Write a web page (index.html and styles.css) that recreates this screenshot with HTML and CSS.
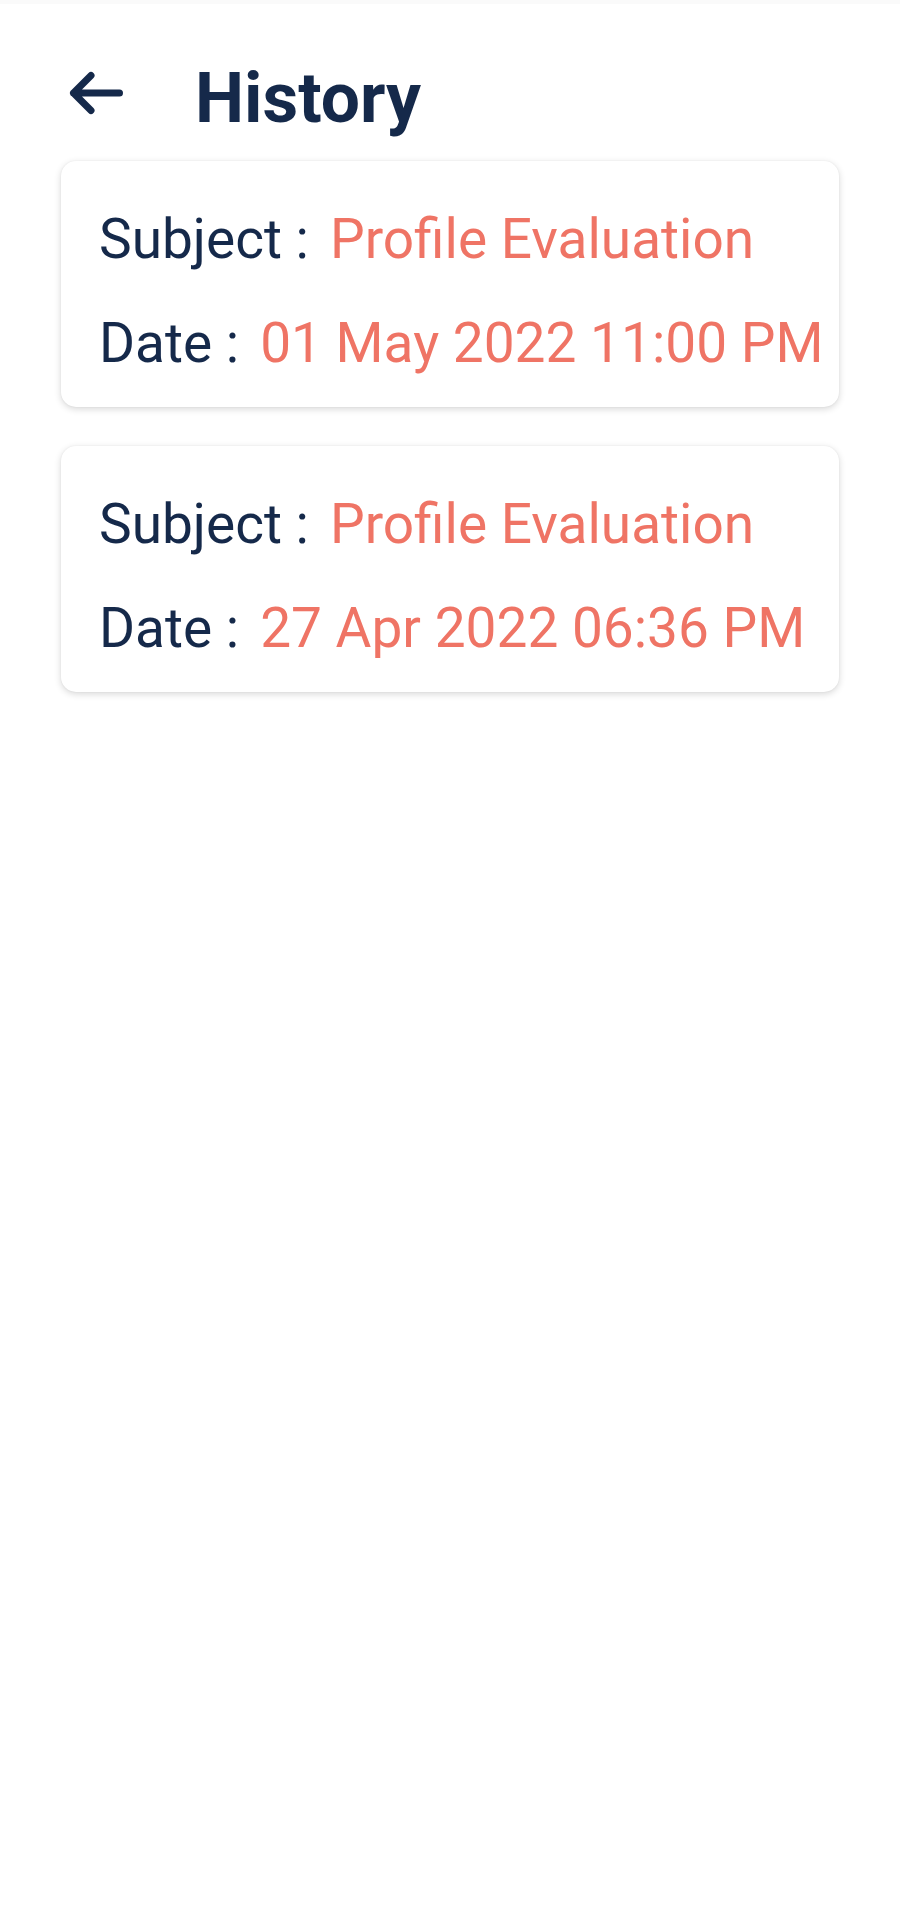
FILE: index.html
```html
<!DOCTYPE html>
<html lang="en">
<head>
<meta charset="utf-8">
<title>History</title>
<link rel="stylesheet" href="styles.css">
</head>
<body>
<div class="statusbar"></div>
<header class="header">
  <svg class="back" width="60" height="50" viewBox="0 0 60 50" aria-hidden="true">
    <path d="M9.5 25H55.5M27 7.5L9.5 25L27 42.5" fill="none" stroke="#15294a" stroke-width="7" stroke-linecap="round" stroke-linejoin="round"/>
  </svg>
  <h1 class="title">History</h1>
</header>
<main class="list">
  <section class="card">
    <div class="row"><span class="label">Subject :</span><span class="value">Profile Evaluation</span></div>
    <div class="row"><span class="label">Date :</span><span class="value">01 May 2022 11:00 PM</span></div>
  </section>
  <section class="card">
    <div class="row"><span class="label">Subject :</span><span class="value">Profile Evaluation</span></div>
    <div class="row"><span class="label">Date :</span><span class="value">27 Apr 2022 06:36 PM</span></div>
  </section>
</main>
</body>
</html>
```

FILE: styles.css
```css
html, body {
  margin: 0;
  padding: 0;
  background: #ffffff;
}
body {
  font-family: Roboto, "Noto Sans", "Liberation Sans", sans-serif;
  color: #15294a;
  width: 900px;
  min-height: 1906px;
}
.statusbar {
  height: 4px;
  background: #fafafa;
}
.header {
  display: flex;
  align-items: center;
  padding: 55px 0 0 64px;
  height: 80px;
}
.back {
  display: block;
  margin-bottom: 12px;
  flex: none;
}
.title {
  margin: 0 0 0 71px;
  font-size: 69.5px;
  line-height: 80px;
  font-weight: 700;
  color: #15294a;
}
.list {
  display: flex;
  flex-direction: column;
  gap: 39px;
  padding: 22px 61px 0 61px;
}
.card {
  background: #fff;
  border-radius: 15px;
  box-shadow: 0 2px 7px rgba(0, 0, 0, 0.16), 0 0 2px rgba(0, 0, 0, 0.06);
  padding: 46px 20px 32px 38px;
  display: flex;
  flex-direction: column;
  gap: 40px;
}
.row {
  display: flex;
  font-size: 55px;
  line-height: 64px;
  white-space: nowrap;
}
.label {
  color: #15294a;
}
.value {
  color: #ef7465;
  margin-left: 21px;
}
```
